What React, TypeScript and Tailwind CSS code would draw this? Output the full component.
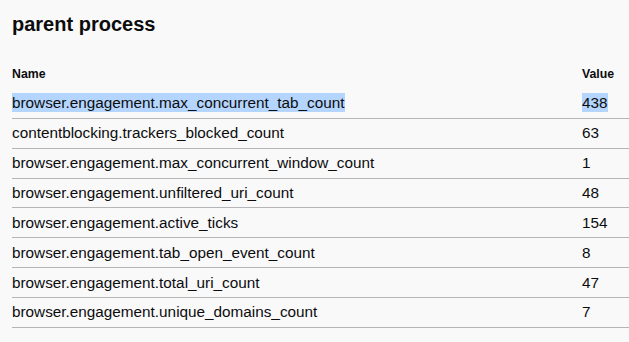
import React from 'react';

interface Row {
  name: string;
  value: number;
}

const rows: Row[] = [
  { name: 'browser.engagement.max_concurrent_tab_count', value: 438 },
  { name: 'contentblocking.trackers_blocked_count', value: 63 },
  { name: 'browser.engagement.max_concurrent_window_count', value: 1 },
  { name: 'browser.engagement.unfiltered_uri_count', value: 48 },
  { name: 'browser.engagement.active_ticks', value: 154 },
  { name: 'browser.engagement.tab_open_event_count', value: 8 },
  { name: 'browser.engagement.total_uri_count', value: 47 },
  { name: 'browser.engagement.unique_domains_count', value: 7 },
];

const App: React.FC = () => {
  return (
    <div
      className="min-h-[342px] bg-[#f9f9fa] pl-3 text-[#0c0c0d]"
      style={{ fontFamily: '"Liberation Sans", Arial, sans-serif' }}
    >
      <h1 className="pt-[12px] text-[20px] font-bold leading-6">parent process</h1>

      <div className="mt-[23px]">
        <div className="grid h-[30px] grid-cols-[570px_1fr] items-center text-[12.3px] font-bold">
          <span>Name</span>
          <span>Value</span>
        </div>

        {rows.map((row, index) => (
          <div
            key={row.name}
            className="grid h-[29.86px] grid-cols-[570px_1fr] items-center border-b border-[#b5b5b7] pt-[1px] text-[15.3px]"
          >
            <span>
              <span className={index === 0 ? 'bg-[#b4d5fe] py-px' : ''}>{row.name}</span>
            </span>
            <span>
              <span className={index === 0 ? 'bg-[#b4d5fe] py-px' : ''}>{row.value}</span>
            </span>
          </div>
        ))}
      </div>
    </div>
  );
};

export default App;
